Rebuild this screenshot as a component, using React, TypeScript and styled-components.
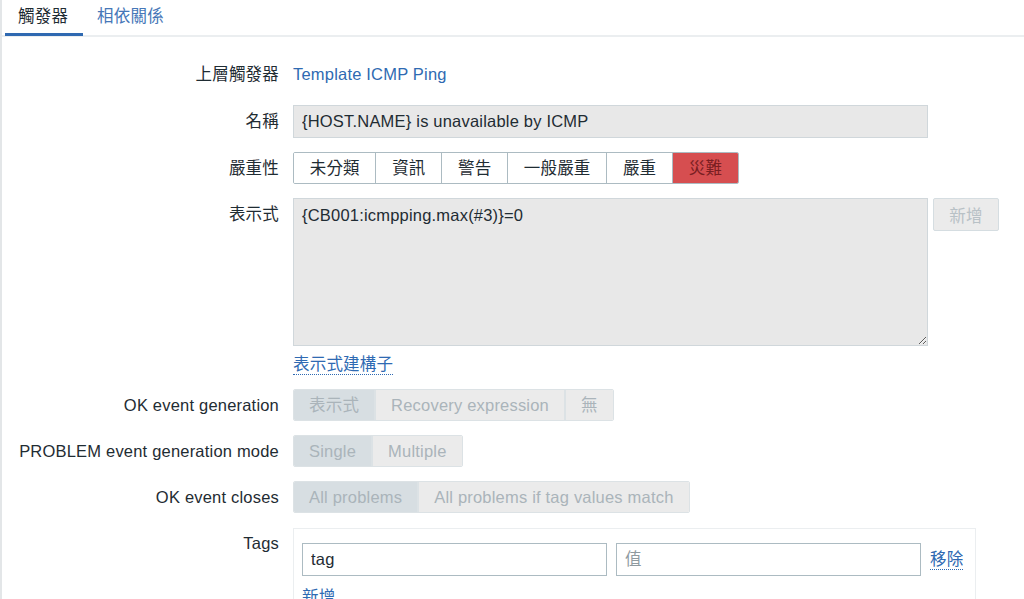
import React from 'react'
import styled, { createGlobalStyle } from 'styled-components'

const GlobalStyle = createGlobalStyle`
  html, body {
    margin: 0;
    padding: 0;
    background: #ffffff;
  }
  body {
    font-family: "Liberation Sans", Arial, "Noto Sans CJK TC", sans-serif;
    font-size: 16.5px;
    letter-spacing: 0.2px;
    color: #1f2c33;
  }
`

const severities = ['未分類', '資訊', '警告', '一般嚴重', '嚴重', '災難']

const App = () => {
    return (
        <Page>
            <GlobalStyle />
            <TabBar>
                <Tab active>觸發器</Tab>
                <Tab>相依關係</Tab>
            </TabBar>

            <Form>
                <Label>上層觸發器</Label>
                <Field>
                    <ParentLink>Template ICMP Ping</ParentLink>
                </Field>

                <Label>名稱</Label>
                <Field>
                    <TextInput readOnly value="{HOST.NAME} is unavailable by ICMP" />
                </Field>

                <Label>嚴重性</Label>
                <Field>
                    <SeverityGroup>
                        {severities.map((s) => (
                            <SeverityButton key={s} selected={s === '災難'}>{s}</SeverityButton>
                        ))}
                    </SeverityGroup>
                </Field>

                <Label>表示式</Label>
                <Field>
                    <ExpressionRow>
                        <ExpressionArea readOnly defaultValue="{CB001:icmpping.max(#3)}=0" />
                        <AddButton disabled>新增</AddButton>
                    </ExpressionRow>
                    <BuilderLink>表示式建構子</BuilderLink>
                </Field>

                <Label>OK event generation</Label>
                <Field>
                    <DisabledGroup>
                        <DisabledButton selected>表示式</DisabledButton>
                        <DisabledButton>Recovery expression</DisabledButton>
                        <DisabledButton>無</DisabledButton>
                    </DisabledGroup>
                </Field>

                <Label>PROBLEM event generation mode</Label>
                <Field>
                    <DisabledGroup>
                        <DisabledButton selected>Single</DisabledButton>
                        <DisabledButton>Multiple</DisabledButton>
                    </DisabledGroup>
                </Field>

                <Label>OK event closes</Label>
                <Field>
                    <DisabledGroup>
                        <DisabledButton selected>All problems</DisabledButton>
                        <DisabledButton>All problems if tag values match</DisabledButton>
                    </DisabledGroup>
                </Field>

                <Label>Tags</Label>
                <Field>
                    <TagsBox>
                        <TagRow>
                            <TagInput readOnly value="tag" />
                            <TagInput readOnly placeholder="值" />
                            <DottedLink>移除</DottedLink>
                        </TagRow>
                        <AddLink>新增</AddLink>
                    </TagsBox>
                </Field>
            </Form>
        </Page>
    )
}

export default App

const Page = styled.div`
border-left: 2px solid #e3e6e8;
min-height: 599px;
box-sizing: border-box;
overflow: hidden;
`

const TabBar = styled.div`
display: flex;
height: 35px;
padding-left: 3px;
border-bottom: 2px solid #ebeef0;
`

const Tab = styled.div<{ active?: boolean }>`
padding: 0 15px 0 ${p => p.active ? '13px' : '14px'};
line-height: 33px;
height: 33px;
color: ${p => p.active ? '#1f2c33' : '#4677b8'};
border-bottom: 3px solid ${p => p.active ? '#2f69b1' : 'transparent'};
margin-bottom: -2px;
`

const Form = styled.div`
display: grid;
grid-template-columns: 277px 1fr;
column-gap: 14px;
row-gap: 14px;
padding-top: 21px;
`

const Label = styled.div`
text-align: right;
line-height: 32px;
white-space: nowrap;
`

const Field = styled.div`
display: flex;
flex-direction: column;
align-items: flex-start;
min-height: 32px;
`

const ParentLink = styled.span`
line-height: 33px;
color: #2f6ab2;
`

const TextInput = styled.input`
box-sizing: border-box;
width: 635px;
height: 33px;
padding: 0 8px;
font: inherit;
letter-spacing: inherit;
color: #1f2c33;
background: #e8e8e8;
border: 1px solid #d0d7db;
outline: none;
`

const SeverityGroup = styled.div`
display: flex;
height: 32px;
border: 1px solid #acbbc2;
border-radius: 2px;
box-sizing: border-box;
overflow: hidden;
`

const SeverityButton = styled.div<{ selected?: boolean }>`
padding: 0 15.7px;
line-height: 30px;
background: ${p => p.selected ? '#d64e50' : '#ffffff'};
color: ${p => p.selected ? '#7a1e22' : '#1f2c33'};
border-left: 1px solid #acbbc2;
&:first-child {
  border-left: none;
}
`

const ExpressionRow = styled.div`
display: flex;
align-items: flex-start;
gap: 5px;
`

const ExpressionArea = styled.textarea`
box-sizing: border-box;
width: 635px;
height: 148px;
padding: 6px 8px;
font: inherit;
letter-spacing: inherit;
line-height: 20px;
color: #1f2c33;
background: #e8e8e8;
border: 1px solid #d0d7db;
outline: none;
resize: both;
`

const AddButton = styled.button`
box-sizing: border-box;
width: 66px;
height: 33px;
font: inherit;
letter-spacing: inherit;
color: #b8c1c6;
background: #ebebeb;
border: 1px solid #d5dde1;
border-radius: 2px;
`

const DottedLink = styled.span`
color: #2f6ab2;
border-bottom: 1px dotted #2f6ab2;
line-height: 19px;
`

const BuilderLink = styled(DottedLink)`
margin-top: 9px;
`

const DisabledGroup = styled.div`
display: flex;
height: 32px;
box-sizing: border-box;
border: 1px solid #dce2e5;
border-radius: 2px;
overflow: hidden;
`

const DisabledButton = styled.div<{ selected?: boolean }>`
padding: 0 15px;
line-height: 30px;
color: #aab4ba;
background: ${p => p.selected ? '#d7dee2' : '#ebebeb'};
border-left: 2px solid #dce2e5;
&:first-child {
  border-left: none;
}
`

const TagsBox = styled.div`
box-sizing: border-box;
width: 683px;
margin-top: 1px;
padding: 14px 8px 0;
border: 1px solid #ebeef0;
`

const TagRow = styled.div`
display: flex;
align-items: center;
gap: 9px;
`

const TagInput = styled.input`
box-sizing: border-box;
width: 305px;
height: 33px;
padding: 0 8px;
font: inherit;
letter-spacing: inherit;
color: #1f2c33;
background: #ffffff;
border: 1px solid #acbbc2;
outline: none;
&::placeholder {
  color: #8f9aa0;
}
`

const AddLink = styled(DottedLink)`
display: inline-block;
margin-top: 12px;
`
